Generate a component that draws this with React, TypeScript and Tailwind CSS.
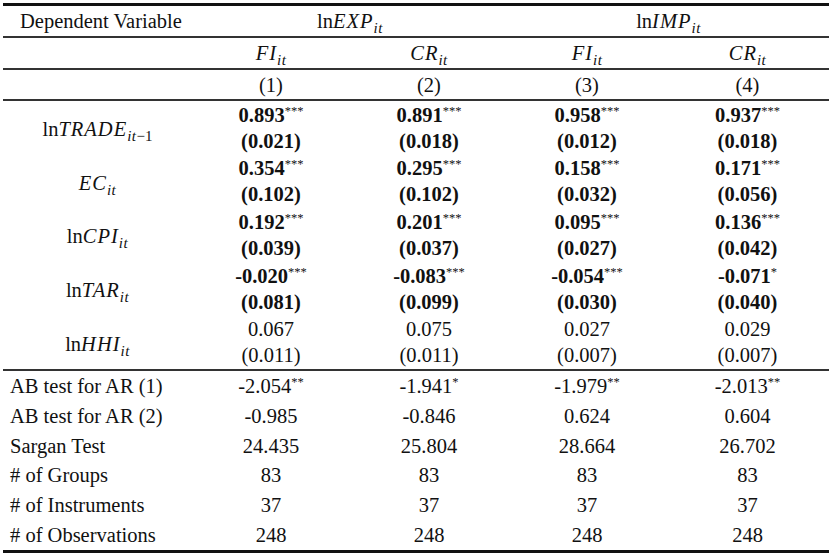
import React from "react";

// ---- Table data ----
type Cell = [string, string?]; // [value, stars]

type VarRow = {
  ln: boolean;
  name: string;
  sub: string;
  coef: Cell[];
  se: string[];
  bold: boolean;
};

const varRows: VarRow[] = [
  {
    ln: true,
    name: "TRADE",
    sub: "it−1",
    coef: [["0.893", "***"], ["0.891", "***"], ["0.958", "***"], ["0.937", "***"]],
    se: ["(0.021)", "(0.018)", "(0.012)", "(0.018)"],
    bold: true,
  },
  {
    ln: false,
    name: "EC",
    sub: "it",
    coef: [["0.354", "***"], ["0.295", "***"], ["0.158", "***"], ["0.171", "***"]],
    se: ["(0.102)", "(0.102)", "(0.032)", "(0.056)"],
    bold: true,
  },
  {
    ln: true,
    name: "CPI",
    sub: "it",
    coef: [["0.192", "***"], ["0.201", "***"], ["0.095", "***"], ["0.136", "***"]],
    se: ["(0.039)", "(0.037)", "(0.027)", "(0.042)"],
    bold: true,
  },
  {
    ln: true,
    name: "TAR",
    sub: "it",
    coef: [["-0.020", "***"], ["-0.083", "***"], ["-0.054", "***"], ["-0.071", "*"]],
    se: ["(0.081)", "(0.099)", "(0.030)", "(0.040)"],
    bold: true,
  },
  {
    ln: true,
    name: "HHI",
    sub: "it",
    coef: [["0.067"], ["0.075"], ["0.027"], ["0.029"]],
    se: ["(0.011)", "(0.011)", "(0.007)", "(0.007)"],
    bold: false,
  },
];

const statRows: { label: string; vals: Cell[] }[] = [
  { label: "AB test for AR (1)", vals: [["-2.054", "**"], ["-1.941", "*"], ["-1.979", "**"], ["-2.013", "**"]] },
  { label: "AB test for AR (2)", vals: [["-0.985"], ["-0.846"], ["0.624"], ["0.604"]] },
  { label: "Sargan Test", vals: [["24.435"], ["25.804"], ["28.664"], ["26.702"]] },
  { label: "# of Groups", vals: [["83"], ["83"], ["83"], ["83"]] },
  { label: "# of Instruments", vals: [["37"], ["37"], ["37"], ["37"]] },
  { label: "# of Observations", vals: [["248"], ["248"], ["248"], ["248"]] },
];

const grid = "grid grid-cols-[189px_158px_158px_158px_163px]";

// math-ish variable: ln + italic name + italic subscript
function MathVar({ ln = false, name, sub }: { ln?: boolean; name: string; sub: string }) {
  const minusOne = sub.endsWith("−1");
  return (
    <span className="whitespace-nowrap">
      {ln && <span>ln</span>}
      <span className="italic tracking-[1px]">{name}</span>
      <span className="relative top-[5px] text-[15px] leading-none">
        <span className="italic tracking-[0.5px]">it</span>
        {minusOne && <span>−1</span>}
      </span>
    </span>
  );
}

function Num({ cell, bold }: { cell: Cell; bold?: boolean }) {
  return (
    <span className="whitespace-nowrap">
      <span className={bold ? "font-bold" : ""}>{cell[0]}</span>
      {cell[1] && (
        <span className="relative -top-[7px] text-[12.5px] leading-none font-normal">{cell[1]}</span>
      )}
    </span>
  );
}

export default function App() {
  return (
    <div className="min-h-[557px] w-[832px] bg-white pt-[3px] pl-[3px] font-['Liberation_Serif','Times_New_Roman',serif] text-[20.5px] leading-[26px] text-[#111]">
      <div className="w-[826px] border-t-[3px] border-b-[3px] border-[#111]">
        {/* header row 1 */}
        <div className={`${grid} h-[32px] items-center border-b-2 border-[#333]`}>
          <div className="pl-[17px]">Dependent Variable</div>
          <div className="col-span-2 text-center">
            <MathVar ln name="EXP" sub="it" />
          </div>
          <div className="col-span-2 text-center">
            <MathVar ln name="IMP" sub="it" />
          </div>
        </div>

        {/* header row 2 */}
        <div className={`${grid} h-[32px] items-center border-b-2 border-[#333]`}>
          <div />
          <div className="text-center"><MathVar name="FI" sub="it" /></div>
          <div className="text-center"><MathVar name="CR" sub="it" /></div>
          <div className="text-center"><MathVar name="FI" sub="it" /></div>
          <div className="text-center"><MathVar name="CR" sub="it" /></div>
        </div>

        {/* header row 3 */}
        <div className={`${grid} h-[31px] items-center border-b-2 border-[#333]`}>
          <div />
          {["(1)", "(2)", "(3)", "(4)"].map((c) => (
            <div key={c} className="text-center">{c}</div>
          ))}
        </div>

        {/* coefficient blocks */}
        <div className="flex h-[270px] flex-col border-b-2 border-[#333]">
          {varRows.map((r) => (
            <div key={r.name} className={`${grid} flex-1 items-center`}>
              <div className="pt-[3px] text-center">
                <MathVar ln={r.ln} name={r.name} sub={r.sub} />
              </div>
              {r.coef.map((c, i) => (
                <div key={i} className="flex flex-col items-center">
                  <Num cell={c} bold={r.bold} />
                  <span className={r.bold ? "font-bold" : ""}>{r.se[i]}</span>
                </div>
              ))}
            </div>
          ))}
        </div>

        {/* test statistics */}
        <div className="flex h-[179px] flex-col">
          {statRows.map((r) => (
            <div key={r.label} className={`${grid} flex-1 items-center`}>
              <div className="pl-[7px]">{r.label}</div>
              {r.vals.map((v, i) => (
                <div key={i} className="text-center">
                  <Num cell={v} />
                </div>
              ))}
            </div>
          ))}
        </div>
      </div>
    </div>
  );
}
